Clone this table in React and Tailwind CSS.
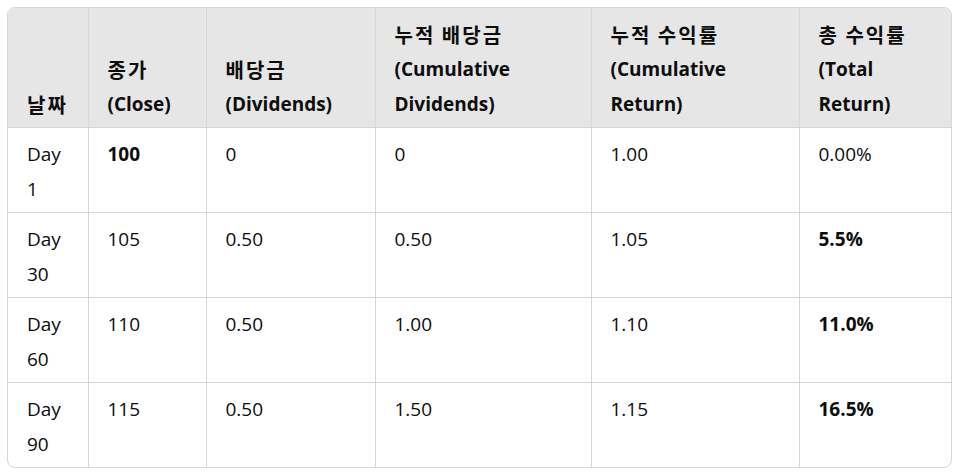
const KO = /[\uAC00-\uD7A3]/;

function Txt({ s }) {
  if (!KO.test(s)) return s;
  return (
    <span className="text-[20px] tracking-[2px]" style={{ fontFamily: '"Noto Sans CJK KR", sans-serif' }}>
      {s}
    </span>
  );
}

export default function App() {
  const head = [
    ["날짜"],
    ["종가", "(Close)"],
    ["배당금", "(Dividends)"],
    ["누적 배당금", "(Cumulative", "Dividends)"],
    ["누적 수익률", "(Cumulative", "Return)"],
    ["총 수익률", "(Total", "Return)"],
  ];
  const widths = ["w-[80px]", "w-[118px]", "w-[169px]", "w-[216px]", "w-[208px]", "w-[152px]"];
  const rows = [
    [["Day", "1"], "100", "0", "0", "1.00", "0.00%"],
    [["Day", "30"], "105", "0.50", "0.50", "1.05", "5.5%"],
    [["Day", "60"], "110", "0.50", "1.00", "1.10", "11.0%"],
    [["Day", "90"], "115", "0.50", "1.50", "1.15", "16.5%"],
  ];
  const bold = (ri, ci) => (ri === 0 && ci === 1) || (ri > 0 && ci === 5);
  return (
    <div
      className="w-[960px] h-[476px] bg-white pl-[7px] pt-[7px] text-[#0d0d0d] text-[19px] leading-[35px]"
      style={{ fontFamily: '"Open Sans", "Noto Sans CJK KR", sans-serif' }}
    >
      <div className="w-[945px] border border-[#d6d6d6] rounded-[8px] overflow-hidden">
        <table className="table-fixed border-collapse w-full">
          <thead>
            <tr className="bg-[#e6e6e6]">
              {head.map((h, i) => (
                <th
                  key={i}
                  className={`${widths[i]} align-bottom text-left font-bold px-[19px] pt-[9px] pb-[5px] border-[#d6d6d6] ${i > 0 ? "border-l" : ""}`}
                >
                  {h.map((l, j) => (
                    <div key={j} className="whitespace-nowrap h-[35px]">
                      <Txt s={l} />
                    </div>
                  ))}
                </th>
              ))}
            </tr>
          </thead>
          <tbody>
            {rows.map((r, ri) => (
              <tr key={ri} className="border-t border-[#d6d6d6]">
                {r.map((c, ci) => (
                  <td
                    key={ci}
                    className={`align-top px-[19px] pt-[9px] pb-[5px] border-[#d6d6d6] ${ci > 0 ? "border-l" : ""} ${bold(ri, ci) ? "font-bold" : ""}`}
                  >
                    {Array.isArray(c) ? c.map((l, j) => <div key={j} className="h-[35px]">{l}</div>) : <div className="h-[35px]">{c}</div>}
                  </td>
                ))}
              </tr>
            ))}
          </tbody>
        </table>
      </div>
    </div>
  );
}
